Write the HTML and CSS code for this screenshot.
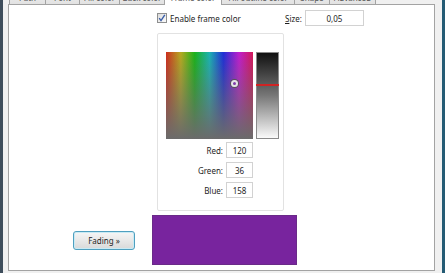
FILE: index.html
```html
<!DOCTYPE html>
<html lang="en">
<head>
    <meta charset="UTF-8">
    <title>Frame color</title>
    <link rel="stylesheet" href="styles.css">
</head>
<body>
    <div class="window">
        <div class="tabs">
            <div class="tab">Path</div>
            <div class="tab">Font</div>
            <div class="tab">Fill color</div>
            <div class="tab">Back color</div>
            <div class="tab active">Frame color</div>
            <div class="tab">Fill outline color</div>
            <div class="tab">Shape</div>
            <div class="tab">Advanced</div>
        </div>

        <div class="panel">
            <div class="frame-options">
                <div class="top-row">
                    <label class="check">
                        <span class="check-box">
                            <svg width="8" height="8" viewBox="0 0 8 8"><path d="M1.2 4.2 L3 6.6 L6.8 0.8" fill="none" stroke="#3a5ea8" stroke-width="1.4"/></svg>
                        </span>
                        Enable frame color
                    </label>
                    <label class="size-label"><u>S</u>ize:</label>
                    <input class="field size-field" type="text" value="0,05">
                </div>

                <div class="picker">
                    <div class="picker-area">
                        <div class="spectrum"><span class="marker"></span></div>
                        <div class="lightness"><span class="level"></span></div>
                    </div>
                    <div class="rgb-row"><label>Red:</label><input class="field" type="text" value="120"></div>
                    <div class="rgb-row"><label>Green:</label><input class="field" type="text" value="36"></div>
                    <div class="rgb-row"><label>Blue:</label><input class="field" type="text" value="158"></div>
                </div>
            </div>

            <div class="bottom-row">
                <button class="fade-btn">Fading &raquo;</button>
                <div class="swatch"></div>
            </div>
        </div>
    </div>
</body>
</html>
```

FILE: styles.css
```css
body {
    margin: 0;
    background-color: #f0f0f0;
    font-family: 'Noto Sans', 'Open Sans', sans-serif;
    font-size: 8px;
    color: #1e1e1e;
    overflow: hidden;
}

.window {
    height: 273px;
    box-sizing: border-box;
    border-left: 3px solid #3e4d5b;
    border-right: 3px solid #245b74;
    padding: 0 7px 0 5px;
    overflow: hidden;
}

/* tab strip, mostly cut off at the top */
.tabs {
    display: flex;
    margin-top: -14px;
    padding-left: 1px;
    height: 18px;
    position: relative;
    z-index: 1;
}

.tab {
    box-sizing: border-box;
    height: 18px;
    border: 1px solid #a3a3a3;
    border-bottom: none;
    margin-right: -1px;
    background: linear-gradient(#f4f4f4, #e2e2e2);
    color: #555;
    text-align: center;
    line-height: 21px;
    white-space: nowrap;
    overflow: hidden;
}

.tab:nth-child(1) { width: 37px; }
.tab:nth-child(2) { width: 35px; }
.tab:nth-child(3) { width: 41px; }
.tab:nth-child(4) { width: 46px; }
.tab:nth-child(5) { width: 58px; }
.tab:nth-child(6) { width: 74px; }
.tab:nth-child(7) { width: 36px; }
.tab:nth-child(8) { width: 47px; }

.tab.active {
    background: #fff;
    height: 19px;
    margin-bottom: -1px;
}

.panel {
    height: 267px;
    box-sizing: border-box;
    background-color: #fff;
    border: 1px solid #a3a3a3;
}

.frame-options {
    padding: 5px 0 0 148px;
}

.top-row {
    display: flex;
    align-items: center;
    height: 16px;
}

.check {
    display: flex;
    align-items: center;
    width: 128px;
}

.check-box {
    box-sizing: border-box;
    width: 10px;
    height: 10px;
    margin-right: 3px;
    border: 1px solid #8e8f8f;
    background: linear-gradient(135deg, #dcdcdc, #fbfbfb);
    display: flex;
    align-items: center;
    justify-content: center;
}

.size-label {
    margin-right: 3px;
}

.field {
    box-sizing: border-box;
    height: 16px;
    border: 1px solid #d2d2d2;
    padding: 0;
    font-family: inherit;
    font-size: 8px;
    color: #1e1e1e;
    text-align: center;
    outline: none;
}

.size-field {
    width: 59px;
}

.picker {
    box-sizing: border-box;
    width: 127px;
    height: 178px;
    margin-top: 7px;
    border: 1px solid #e2e2e2;
    border-radius: 2px;
    padding: 18px 0 0 8px;
}

.picker-area {
    display: flex;
    gap: 3px;
    margin-bottom: 3px;
}

.spectrum {
    position: relative;
    width: 87px;
    height: 87px;
    background:
        linear-gradient(rgba(108, 108, 108, 0), #6b6b6b),
        linear-gradient(to right,
            hsl(5, 75%, 46%),
            hsl(55, 70%, 42%) 17%,
            hsl(120, 75%, 40%) 33%,
            hsl(180, 75%, 40%) 50%,
            hsl(235, 75%, 48%) 66%,
            hsl(295, 75%, 46%) 84%,
            hsl(340, 80%, 46%));
}

.marker {
    position: absolute;
    left: 65px;
    top: 28px;
    width: 7px;
    height: 7px;
    box-sizing: border-box;
    border: 2px solid #e6e6e6;
    border-radius: 50%;
    box-shadow: 0 0 0 1px #555;
}

.lightness {
    position: relative;
    width: 23px;
    height: 87px;
    box-sizing: border-box;
    border: 1px solid #8a8a8a;
    background: linear-gradient(#111, #777 50%, #fafafa);
}

.level {
    position: absolute;
    left: -1px;
    right: -1px;
    top: 31px;
    height: 2px;
    background-color: #cf2424;
}

.rgb-row {
    display: flex;
    align-items: center;
    justify-content: flex-end;
    width: 87px;
    margin-bottom: 4px;
}

.rgb-row label {
    margin-right: 3px;
}

.rgb-row .field {
    width: 27px;
}

.bottom-row {
    display: flex;
    align-items: center;
    padding-left: 64px;
    margin-top: 4px;
}

.fade-btn {
    width: 62px;
    height: 19px;
    margin-right: 17px;
    border: 1px solid #4f9fbf;
    border-radius: 3px;
    background: linear-gradient(#f6f6f6, #e8e8e8 50%, #d9d9d9);
    box-shadow: inset 0 0 0 1px #c9eaf4;
    font-family: inherit;
    font-size: 8px;
    color: #1e1e1e;
    padding: 0;
}

.swatch {
    width: 145px;
    height: 50px;
    box-sizing: border-box;
    border: 1px solid #6a2a88;
    background-color: #78249e;
}
```
